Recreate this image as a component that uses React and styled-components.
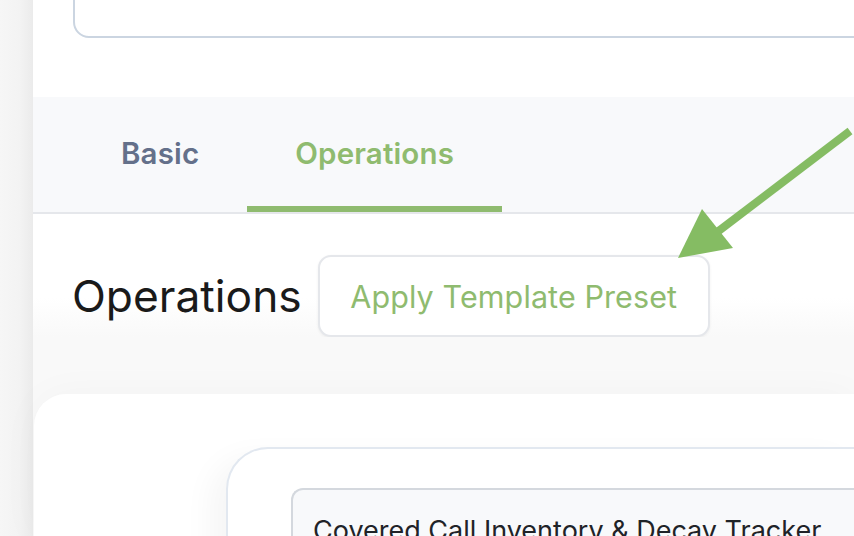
import React from 'react'
import styled, { createGlobalStyle } from 'styled-components'

const GlobalStyle = createGlobalStyle`
  html, body {
    margin: 0;
    padding: 0;
    background: #f4f4f4;
    font-family: Inter, "Noto Sans", sans-serif;
    overflow: hidden;
  }
`

const Page = styled.div`
  display: flex;
  width: 854px;
  height: 536px;
  overflow: hidden;
  position: relative;
`

const SideStrip = styled.div`
  width: 33px;
  flex-shrink: 0;
  background: linear-gradient(to right, #f6f6f6 0%, #f3f3f3 60%, #ebebeb 100%);
`

const Main = styled.div`
  flex: 1;
  display: flex;
  flex-direction: column;
  background: #fff;
  min-width: 0;
`

const TopArea = styled.div`
  height: 97px;
  padding-left: 40px;
`

const TopCard = styled.div`
  margin-top: -30px;
  height: 64px;
  margin-right: -60px;
  border: 2px solid #cbd5e1;
  border-radius: 16px;
  background: #fff;
`

const TabBar = styled.div`
  display: flex;
  height: 115px;
  padding-left: 40px;
  background: #f8f9fb;
  border-bottom: 2px solid #e5e7eb;
`

const Tab = styled.div`
  display: flex;
  align-items: center;
  padding: 0 48px 4px;
  font-size: 29.5px;
  font-weight: 600;
  letter-spacing: 0.15px;
  color: ${p => (p.$active ? '#8fbb6f' : '#64708a')};
  box-shadow: ${p => (p.$active ? 'inset 0 -6px 0 #8fbb6f' : 'none')};
`

const HeadRow = styled.div`
  display: flex;
  align-items: center;
  gap: 16px;
  padding: 41px 0 0 39px;
  background: linear-gradient(to bottom, #fff 0%, #fff 68%, #f9f9f9 100%);
`

const Heading = styled.h2`
  margin: 0;
  font-size: 44.3px;
  font-weight: 400;
  color: #1a1a1a;
  letter-spacing: 0;
`

const PresetButton = styled.button`
  height: 82px;
  width: 392px;
  border: 2px solid #e5e7eb;
  border-radius: 13px;
  background: #fff;
  box-shadow: 0 1px 3px rgba(0, 0, 0, 0.06);
  font-family: Inter, "Noto Sans", sans-serif;
  font-size: 30.5px;
  letter-spacing: 0.1px;
  color: #8fbb6f;
  cursor: pointer;
`

const LowerArea = styled.div`
  flex: 1;
  background: #f9f9f9;
  padding: 57px 0 0 1px;
  min-height: 0;
`

const LowerCard = styled.div`
  height: 100%;
  background: #fff;
  border-radius: 32px 0 0 0;
  box-shadow: 0 0 40px rgba(0, 0, 0, 0.03);
  padding: 53px 0 0 192px;
  box-sizing: border-box;
`

const InnerCard = styled.div`
  height: 200px;
  border: 2px solid #e2e8f0;
  border-right: none;
  border-radius: 42px 0 0 0;
  background: #fff;
  box-shadow: -16px 10px 30px rgba(0, 0, 0, 0.04);
  padding: 39px 0 0 63px;
`

const TitleInput = styled.div`
  height: 80px;
  border: 2px solid #d4d8de;
  border-right: none;
  border-radius: 12px 0 0 0;
  background: #f8f9fb;
  padding: 24px 0 0 20px;
  box-sizing: border-box;
  font-size: 27px;
  color: #1f2328;
  white-space: nowrap;
`

const Arrow = styled.svg`
  position: absolute;
  left: 0;
  top: 0;
  pointer-events: none;
`

export default function App() {
  return (
    <Page>
      <GlobalStyle />
      <SideStrip />
      <Main>
        <TopArea>
          <TopCard />
        </TopArea>
        <TabBar>
          <Tab>Basic</Tab>
          <Tab $active>Operations</Tab>
        </TabBar>
        <HeadRow>
          <Heading>Operations</Heading>
          <PresetButton>Apply Template Preset</PresetButton>
        </HeadRow>
        <LowerArea>
          <LowerCard>
            <InnerCard>
              <TitleInput>Covered Call Inventory &amp; Decay Tracker</TitleInput>
            </InnerCard>
          </LowerCard>
        </LowerArea>
      </Main>
      <Arrow width="854" height="536" viewBox="0 0 854 536">
        <line x1="850" y1="131" x2="712" y2="236" stroke="#85bc63" strokeWidth="8" />
        <polygon points="678,258 702,209 733,248" fill="#85bc63" />
      </Arrow>
    </Page>
  )
}
